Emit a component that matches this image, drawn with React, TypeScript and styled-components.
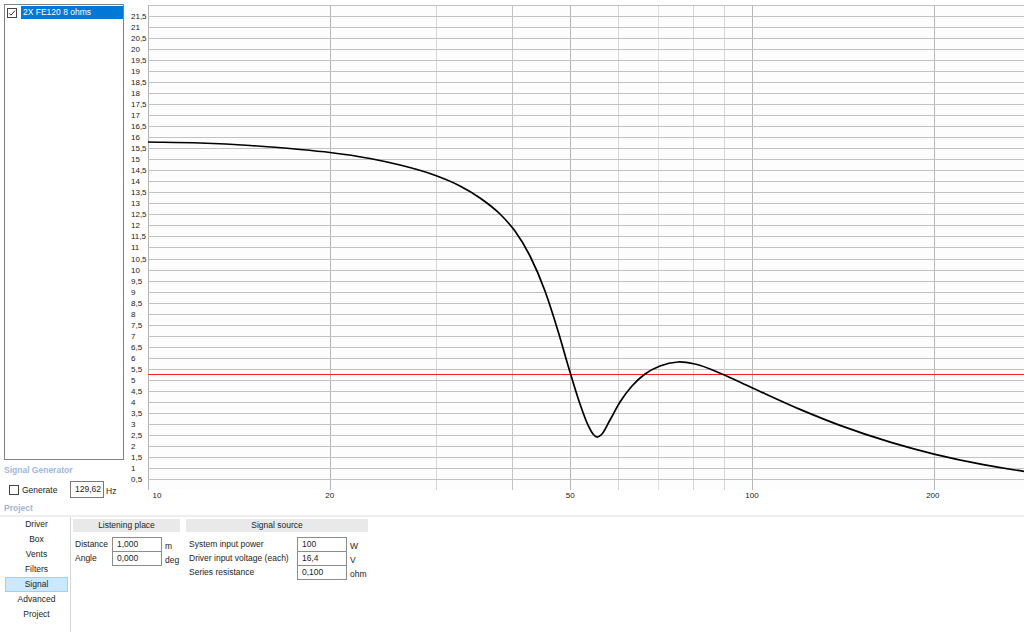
import React from 'react';
import styled, { createGlobalStyle } from 'styled-components';

const GlobalStyle = createGlobalStyle`
  html, body {
    margin: 0;
    padding: 0;
    background: #ffffff;
  }
  body {
    font-family: "Liberation Sans", Arial, sans-serif;
    font-size: 8px;
    color: #1e1e1e;
  }
`;

const Window = styled.div`
  width: 1024px;
  height: 632px;
  display: flex;
  flex-direction: column;
  overflow: hidden;
  background: #ffffff;
`;

const TopArea = styled.div`
  height: 515px;
  display: flex;
`;

const SidePanel = styled.div`
  width: 120px;
  padding: 4px 0 0 4px;
  display: flex;
  flex-direction: column;
`;

const DriverList = styled.div`
  box-sizing: border-box;
  width: 120px;
  height: 457px;
  border: 1px solid #828282;
  background: #ffffff;
  padding-top: 1px;
`;

const ListRow = styled.div`
  height: 13px;
  display: flex;
  align-items: center;
  padding-left: 2px;
`;

const ItemLabel = styled.span<{ $selected?: boolean }>`
  flex: 1;
  height: 13px;
  line-height: 13px;
  margin-left: 4px;
  padding-left: 2px;
  font-size: 8.5px;
  background: ${(p) => (p.$selected ? '#0078d7' : 'transparent')};
  color: ${(p) => (p.$selected ? '#ffffff' : '#1e1e1e')};
`;

const Box = styled.span`
  box-sizing: border-box;
  width: 10px;
  height: 10px;
  border: 1px solid #444;
  background: #fff;
  display: inline-flex;
  align-items: center;
  justify-content: center;
  flex-shrink: 0;
`;

const GroupTitle = styled.div`
  height: 14px;
  line-height: 14px;
  margin-top: 3px;
  font-size: 8.5px;
  font-weight: bold;
  color: #9fb7d7;
`;

const GenRow = styled.div`
  display: flex;
  align-items: center;
  height: 17px;
  margin-top: 4px;
  padding-left: 5px;
`;

const GenLabel = styled.span`
  margin-left: 3px;
  width: 48px;
  font-size: 8.5px;
`;

const SmallInput = styled.div`
  box-sizing: border-box;
  width: 34px;
  height: 17px;
  border: 1px solid #7a7a7a;
  padding-left: 4px;
  line-height: 15px;
  font-size: 8.5px;
`;

const Unit = styled.span<{ $gap?: number }>`
  margin-left: ${(p) => p.$gap ?? 2}px;
  font-size: 8.5px;
  padding-top: 3px;
`;

const Splitter = styled.div`
  width: 4px;
  padding-top: 232px;
  display: flex;
  justify-content: center;
`;

const Grip = styled.div`
  width: 3px;
  height: 12px;
  background-image: radial-gradient(circle, #c4c4c4 0.5px, transparent 0.7px);
  background-size: 2px 2px;
`;

const ChartArea = styled.div`
  width: 896px;
  height: 515px;
`;

const ChartSvg = styled.svg`
  display: block;
  text {
    font-family: "Liberation Sans", Arial, sans-serif;
    font-size: 8px;
    fill: #222;
  }
`;

const BottomArea = styled.div`
  flex: 1;
  display: flex;
  border-top: 2px solid #eeeeee;
`;

const NavList = styled.div`
  width: 70px;
  border-right: 1px solid #d4d4d4;
  display: flex;
  flex-direction: column;
`;

const NavItem = styled.div<{ $active?: boolean }>`
  box-sizing: border-box;
  height: 15px;
  line-height: 13px;
  margin: 0 2px 0 5px;
  text-align: center;
  font-size: 8.5px;
  border: 1px solid ${(p) => (p.$active ? '#99d1ff' : 'transparent')};
  background: ${(p) => (p.$active ? '#cce8ff' : 'transparent')};
`;

const Groups = styled.div`
  display: flex;
  gap: 6px;
  padding: 2px 0 0 2px;
  align-items: flex-start;
`;

const Group = styled.div<{ $width: number }>`
  width: ${(p) => p.$width}px;
`;

const GroupHeader = styled.div`
  height: 13px;
  line-height: 13px;
  background: #e9e9e9;
  text-align: center;
  font-size: 8.5px;
`;

const FieldGrid = styled.div<{ $labelWidth: number; $indent: number }>`
  display: grid;
  grid-template-columns: ${(p) => p.$labelWidth}px 50px auto;
  grid-auto-rows: 14px;
  margin-top: 5px;
  padding-left: ${(p) => p.$indent}px;
  align-items: center;
`;

const FieldLabel = styled.span`
  font-size: 8.5px;
  white-space: nowrap;
`;

const FieldInput = styled.div`
  box-sizing: border-box;
  height: 15px;
  align-self: start;
  border: 1px solid #8c8c8c;
  padding-left: 4px;
  line-height: 13px;
  font-size: 8.5px;
  background: #fff;
`;

const Check = () => (
  <svg width="8" height="8" viewBox="0 0 8 8">
    <path d="M1 4.2 L3 6.2 L7 1.5" fill="none" stroke="#333" strokeWidth="1" />
  </svg>
);

// chart scales: excursion in mm on a linear axis, frequency on a log axis
const BASE_Y = 490;
const PX_PER_MM = 22.047;
const PLOT_LEFT = 20;
const DECADE = 604;
const CHART_W = 896;

const yOf = (v: number) => BASE_Y - v * PX_PER_MM;
const xOf = (f: number) => PLOT_LEFT + DECADE * Math.log10(f / 10);
const crisp = (n: number) => Math.round(n) + 0.5;
const fmt = (v: number) => String(v).replace('.', ',');

const mmTicks = Array.from({ length: 44 }, (_, i) => (i + 1) * 0.5);

const freqLines: { f: number; color: string }[] = [
  { f: 10, color: '#b4b4b4' },
  { f: 20, color: '#b8b8b8' },
  { f: 30, color: '#d6d6d6' },
  { f: 40, color: '#c4c4c4' },
  { f: 50, color: '#b8b8b8' },
  { f: 60, color: '#d6d6d6' },
  { f: 70, color: '#dedede' },
  { f: 80, color: '#d6d6d6' },
  { f: 90, color: '#d6d6d6' },
  { f: 100, color: '#b8b8b8' },
  { f: 200, color: '#b8b8b8' },
];

const freqLabels = [
  { f: 10, x: 29 },
  { f: 20, x: xOf(20) },
  { f: 50, x: xOf(50) },
  { f: 100, x: xOf(100) },
  { f: 200, x: xOf(200) - 1 },
];

// cone excursion trace, sampled along the plot
const trace: [number, number][] = [
  [148, 142], [200, 143], [250, 145.5], [300, 149.5], [330, 152.5], [370, 158.5],
  [400, 165], [430, 173.5], [460, 186], [480, 198], [500, 214], [515, 231],
  [530, 256], [545, 291], [558, 331], [570, 372], [580, 404], [588, 425],
  [593, 434], [597, 437], [602, 434], [610, 420], [620, 402], [632, 386],
  [645, 374], [660, 366], [678, 362], [695, 364], [722, 374], [752, 387.7],
  [800, 409.4], [840, 425.4], [891, 442.4], [934, 454.1], [982, 464.4],
  [1024, 471.4], [1065, 476.8],
].map(([x, y]) => [x - 128, y] as [number, number]);

// cubic Hermite through the samples, y as a function of x
const tracePath = (pts: [number, number][]) => {
  const n = pts.length;
  const sec = pts.slice(0, -1).map((p, i) => (pts[i + 1][1] - p[1]) / (pts[i + 1][0] - p[0]));
  const slope = pts.map((p, i) => {
    if (i === 0) return sec[0];
    if (i === n - 1) return sec[n - 2];
    const h0 = p[0] - pts[i - 1][0];
    const h1 = pts[i + 1][0] - p[0];
    return (h1 * sec[i - 1] + h0 * sec[i]) / (h0 + h1);
  });
  let d = `M${pts[0][0]},${pts[0][1]}`;
  for (let i = 0; i < n - 1; i++) {
    const [x1, y1] = pts[i];
    const [x2, y2] = pts[i + 1];
    const h = (x2 - x1) / 3;
    d += ` C${(x1 + h).toFixed(1)},${(y1 + slope[i] * h).toFixed(1)}`
      + ` ${(x2 - h).toFixed(1)},${(y2 - slope[i + 1] * h).toFixed(1)} ${x2},${y2}`;
  }
  return d;
};

const ExcursionChart = () => (
  <ChartSvg width={CHART_W} height={515} viewBox={`0 0 ${CHART_W} 515`}>
    <rect x={PLOT_LEFT} y={yOf(22)} width={CHART_W - PLOT_LEFT} height={BASE_Y - yOf(22)} fill="#fdfdfd" />
    {freqLines.map(({ f, color }) => (
      <line key={f} x1={crisp(xOf(f))} x2={crisp(xOf(f))} y1={yOf(22)} y2={BASE_Y} stroke={color} strokeWidth={1} />
    ))}
    {mmTicks.map((v) => (
      <line key={v} x1={PLOT_LEFT} x2={CHART_W} y1={crisp(yOf(v))} y2={crisp(yOf(v))} stroke="#c2c2c2" strokeWidth={1} />
    ))}
    {mmTicks.filter((v) => v <= 21.5).map((v) => (
      <text key={v} x={3} y={yOf(v) + 3}>{fmt(v)}</text>
    ))}
    {freqLabels.map(({ f, x }) => (
      <text key={f} x={x} y={498} textAnchor="middle">{f}</text>
    ))}
    <line x1={PLOT_LEFT} x2={CHART_W} y1={374.5} y2={374.5} stroke="#ff2020" strokeWidth={1} />
    <path d={tracePath(trace)} fill="none" stroke="#000" strokeWidth={1.7} />
  </ChartSvg>
);

const navItems = ['Driver', 'Box', 'Vents', 'Filters', 'Signal', 'Advanced', 'Project'];

const listening = [
  { label: 'Distance', value: '1,000', unit: 'm' },
  { label: 'Angle', value: '0,000', unit: 'deg' },
];

const source = [
  { label: 'System input power', value: '100', unit: 'W' },
  { label: 'Driver input voltage (each)', value: '16,4', unit: 'V' },
  { label: 'Series resistance', value: '0,100', unit: 'ohm' },
];

const Fields: React.FC<{ rows: typeof listening; labelWidth: number; indent: number }> = ({
  rows, labelWidth, indent,
}) => (
  <FieldGrid $labelWidth={labelWidth} $indent={indent}>
    {rows.map((r) => (
      <React.Fragment key={r.label}>
        <FieldLabel>{r.label}</FieldLabel>
        <FieldInput>{r.value}</FieldInput>
        <Unit $gap={3}>{r.unit}</Unit>
      </React.Fragment>
    ))}
  </FieldGrid>
);

const App: React.FC = () => (
  <>
    <GlobalStyle />
    <Window>
      <TopArea>
        <SidePanel>
          <DriverList>
            <ListRow>
              <Box><Check /></Box>
              <ItemLabel $selected>2X FE120 8 ohms</ItemLabel>
            </ListRow>
          </DriverList>
          <GroupTitle>Signal Generator</GroupTitle>
          <GenRow>
            <Box />
            <GenLabel>Generate</GenLabel>
            <SmallInput>129,62</SmallInput>
            <Unit $gap={2}>Hz</Unit>
          </GenRow>
          <GroupTitle>Project</GroupTitle>
        </SidePanel>
        <Splitter>
          <Grip />
        </Splitter>
        <ChartArea>
          <ExcursionChart />
        </ChartArea>
      </TopArea>
      <BottomArea>
        <NavList>
          {navItems.map((item) => (
            <NavItem key={item} $active={item === 'Signal'}>{item}</NavItem>
          ))}
        </NavList>
        <Groups>
          <Group $width={107}>
            <GroupHeader>Listening place</GroupHeader>
            <Fields rows={listening} labelWidth={37} indent={2} />
          </Group>
          <Group $width={182}>
            <GroupHeader>Signal source</GroupHeader>
            <Fields rows={source} labelWidth={108} indent={3} />
          </Group>
        </Groups>
      </BottomArea>
    </Window>
  </>
);

export default App;
